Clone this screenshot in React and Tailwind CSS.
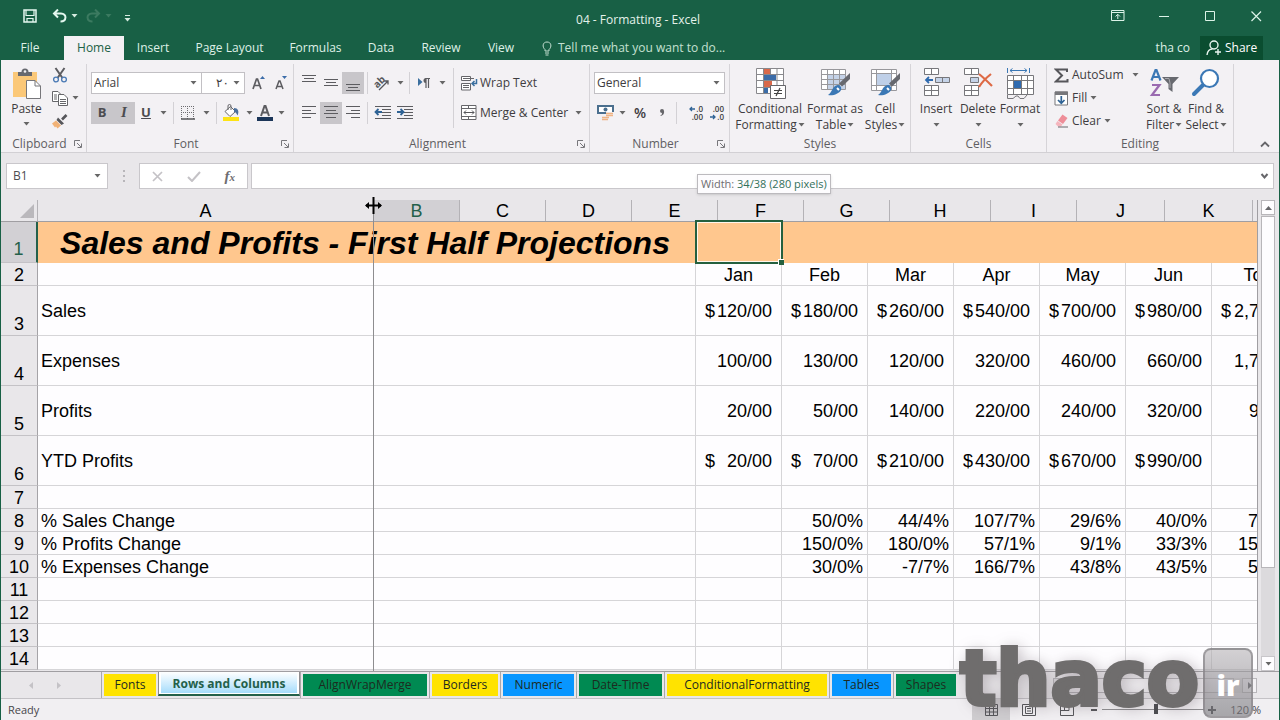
import React from "react";

/* ---------- small drawings ---------- */

function Arrow({ className = "text-[#666]" }) {
  return (
    <svg viewBox="0 0 7 4" className={`h-1 w-[7px] shrink-0 ${className}`} aria-hidden="true">
      <path d="M0.500 0H6.500L3.500 3.500Z" fill="currentColor" />
    </svg>
  );
}

function Svg({ w, h, children }) {
  return (
    <svg width={w} height={h} viewBox={`0 0 ${w} ${h}`} fill="none" className="shrink-0" aria-hidden="true">
      {children}
    </svg>
  );
}

const PasteIcon = () => (
  <Svg w={30} h={32}>
    <path d="M1 4H25V29H1Z" fill="#fbc878" />
    <path d="M6 4H9.500A3.500 3.500 0 0 1 16.500 4H20V8H6Z" fill="#67696f" />
    <circle cx="13" cy="3.500" r="1.300" fill="#f3f1f4" />
    <path d="M14.500 12.500H23L28.500 18V30.500H14.500Z" fill="#fff" stroke="#77777b" />
    <path d="M23 12.500V18H28.500" stroke="#77777b" />
  </Svg>
);
const CutIcon = () => (
  <Svg w={16} h={16}>
    <path d="M3.500 1L10.500 11M12.500 1L5.500 11" stroke="#5c5c60" strokeWidth="2" />
    <circle cx="4" cy="12.500" r="2.400" stroke="#4a7ab5" strokeWidth="1.300" />
    <circle cx="12" cy="12.500" r="2.400" stroke="#4a7ab5" strokeWidth="1.300" />
  </Svg>
);
const CopyIcon = () => (
  <Svg w={16} h={15}>
    <path d="M0.500 0.500H6L9 3.500V10.500H0.500Z" fill="#fff" stroke="#66666a" />
    <path d="M2 4H5M2 6H5M2 8H5" stroke="#66666a" />
    <path d="M6.500 3.500H12L15.500 7V14.500H6.500Z" fill="#fff" stroke="#66666a" />
    <path d="M8 8.500H14M8 10.500H14M8 12.500H14" stroke="#66666a" />
  </Svg>
);
const BrushIcon = () => (
  <Svg w={16} h={15}>
    <path d="M14.500 1L10 5.500" stroke="#56565a" strokeWidth="2.600" />
    <path d="M6 3.500L12 9.500L9.500 11L4.500 6Z" fill="#56565a" />
    <path d="M4 6.500L9 11.500L5.500 14.500L4 12.500L3 13.500L0 9.500Z" fill="#f1b277" />
  </Svg>
);
const BordersIcon = () => (
  <Svg w={14} h={14}>
    <path d="M0.500 0V13M13 0.500H0M6.500 0V13M0 6.500H13M12.500 0V13" stroke="#6c6c70" strokeDasharray="1 1" />
    <path d="M0 13H14" stroke="#56565a" strokeWidth="1.500" />
  </Svg>
);
const FillIcon = () => (
  <Svg w={18} h={18}>
    <path d="M3 7.500L8.500 2.500L13.500 7.500L8 12.500Z" fill="#fff" stroke="#66666a" />
    <path d="M6 6V2A1.500 1.500 0 0 1 9 2V6" stroke="#66666a" />
    <path d="M12 4C16 4 17.500 7.500 15.500 11.500C14.500 9 13.500 8 12 8Z" fill="#4a6f9c" />
    <path d="M1 13H17V17H1Z" fill="#fde314" />
  </Svg>
);
const FontColorIcon = () => (
  <Svg w={16} h={18}>
    <path d="M4 12L7.500 2H8.500L12 12M5 8.500H11" stroke="#5c5c60" strokeWidth="2" />
    <path d="M0 13H16V17H0Z" fill="#1b3558" />
  </Svg>
);
const GrowIcon = ({ down }) => (
  <Svg w={14} h={18}>
    {down ? (
      <>
        <path d="M2 15L5 7H6L9 15M3.500 12.500H7.500" stroke="#5c5c60" strokeWidth="1.500" />
        <path d="M8 2H13L10.500 5Z" fill="#3b6ca8" />
      </>
    ) : (
      <>
        <path d="M1 15L4.500 5H5.500L9 15M2.500 11.500H7.500" stroke="#5c5c60" strokeWidth="1.700" />
        <path d="M8 5H13L10.500 2Z" fill="#3b6ca8" />
      </>
    )}
  </Svg>
);
const Lines = ({ d }) => (
  <Svg w={22} h={22}>
    <path d={d} stroke="#5c5c60" />
  </Svg>
);
const OrientationIcon = () => (
  <Svg w={20} h={20}>
    <text x="2" y="12" fontSize="10" fontWeight="700" fill="#56565a" fontFamily="Open Sans, sans-serif" transform="rotate(-45 8 10)">ab</text>
    <path d="M7 17L16 8M12.500 8H16V11.500" stroke="#56565a" strokeWidth="1.300" />
  </Svg>
);
const DirectionIcon = () => (
  <Svg w={14} h={14}>
    <path d="M1 2L5.500 6L1 10Z" fill="#3b6f9f" />
    <path d="M9 2.500V12M11.500 2.500V12M13 2.500H8.500" stroke="#5c5c60" strokeWidth="1.200" />
    <path d="M9 2A2.500 2.500 0 0 0 9 7Z" fill="#5c5c60" />
  </Svg>
);
const IndentIcon = ({ right }) => (
  <Svg w={22} h={22}>
    <path d="M3 4.500H19M10 7.500H19M10 10.500H19M10 13.500H19M3 16.500H19" stroke="#5c5c60" />
    {right ? (
      <path d="M3 10H9M6.500 7L9.500 10L6.500 13" stroke="#2f6395" strokeWidth="1.800" />
    ) : (
      <path d="M4 10H10M6.500 7L3.500 10L6.500 13" stroke="#2f6395" strokeWidth="1.800" />
    )}
  </Svg>
);
const WrapIcon = () => (
  <Svg w={17} h={16}>
    <path d="M0.500 1.500H9.500V5.500H0.500ZM0.500 8.500H9.500V15H0.500Z" fill="#fff" stroke="#66666a" />
    <path d="M2 3.500H13M2 10.500H8M2 12.500H8" stroke="#66666a" />
    <path d="M15.500 4V8.500H11.500M13.500 6L11 8.500L13.500 11" stroke="#3b6f9f" strokeWidth="1.500" />
  </Svg>
);
const MergeIcon = () => (
  <Svg w={16} h={16}>
    <path d="M0.500 0.500H15V14.500H0.500ZM0.500 3.500H15M0.500 11.500H15M7.500 0.500V3.500M7.500 11.500V14.500" fill="#fff" stroke="#66666a" />
    <path d="M3 7.500H13M5 5.500L3 7.500L5 9.500M11 5.500L13 7.500L11 9.500" stroke="#56565a" />
  </Svg>
);
const MoneyIcon = () => (
  <Svg w={18} h={17}>
    <path d="M1 1H16V8H1Z" fill="#fff" stroke="#4b6f8e" strokeWidth="2" />
    <circle cx="8.500" cy="4.500" r="2" fill="#4b6f8e" />
    <path d="M9 7H17V12H13V16H4V11H9Z" fill="#f3f1f4" />
    <path d="M9 8.500H16M9 10.500H16M5 12.500H12M5 14.500H11" stroke="#f0b484" strokeWidth="1.500" />
  </Svg>
);
function DecimalIcon({ increase }) {
  return (
    <span className="flex w-[18px] flex-col items-end text-[8px] font-semibold leading-[8px] text-[#3c3c40]">
      <span className="flex items-center gap-px">
        {increase && (
          <Svg w={6} h={6}>
            <path d="M6 3H1M3 1L1 3L3 5" stroke="#2f6395" strokeWidth="1.300" />
          </Svg>
        )}
        {increase ? ".0" : ".00"}
      </span>
      <span className="flex items-center gap-px">
        {!increase && (
          <Svg w={6} h={6}>
            <path d="M0 3H5M3 1L5 3L3 5" stroke="#2f6395" strokeWidth="1.300" />
          </Svg>
        )}
        {increase ? ".00" : ".0"}
      </span>
    </span>
  );
}
const ConditionalIcon = () => (
  <Svg w={31} h={31}>
    <path d="M1.500 0.500H28.500V25.500H1.500Z" fill="#fff" />
    <path d="M9 1H15V7H9ZM9 13H17V19H9Z" fill="#d9694a" />
    <path d="M9 7H21V13H9ZM9 19H13V25H9Z" fill="#3b6ca8" />
    <path d="M1.500 0.500H28.500V25.500H1.500ZM1.500 6.500H28.500M1.500 12.500H28.500M1.500 19.500H28.500M8.500 0.500V25.500M15.500 0.500V6.500M22 0.500V25.500" stroke="#88888c" />
    <path d="M15.500 17.500H30.500V30.500H15.500Z" fill="#fff" stroke="#66666a" />
    <path d="M19 22.500H27M19 25.500H27M25 20L21 28" stroke="#444" strokeWidth="1.200" />
  </Svg>
);
const BrushOver = () => (
  <>
    <path d="M30 5V11L22 18.500L19 15.500Z" fill="#67696f" />
    <path d="M17.500 17C20 17 22 19 21 22C19 26 13 28 8 27C12 25 12 18 17.500 17Z" fill="#3b78b5" />
    <path d="M17 20L19 22" stroke="#fff" strokeWidth="2" />
  </>
);
const TableIcon = () => (
  <Svg w={31} h={31}>
    <path d="M1.500 1.500H25.500V21.500H1.500Z" fill="#fff" />
    <path d="M8 6.500H25V21H8Z" fill="#c5d3e8" />
    <path d="M1.500 1.500H25.500V21.500H1.500ZM1.500 6.500H25.500M1.500 11.500H25.500M1.500 16.500H25.500M7.500 1.500V21.500M13.500 1.500V21.500M19.500 1.500V21.500" stroke="#98989c" />
    <BrushOver />
  </Svg>
);
const CellStylesIcon = () => (
  <Svg w={31} h={31}>
    <path d="M1.500 1.500H26.500V22.500H1.500ZM1.500 5.500H26.500M1.500 17.500H26.500M6.500 1.500V22.500M21.500 1.500V22.500" fill="#fff" stroke="#98989c" />
    <path d="M7 6H21V17H7Z" fill="#bfd0e8" />
    <BrushOver />
  </Svg>
);
const InsertIcon = () => (
  <Svg w={30} h={31}>
    <path d="M3.500 0.500H17.500V6.500H3.500ZM10.500 0.500V6.500M3.500 17.500H17.500V27.500H3.500ZM10.500 17.500V27.500M3.500 22.500H17.500" fill="#fff" stroke="#77777b" />
    <path d="M14.500 9.500H28.500V14.500H14.500ZM21.500 9.500V14.500" fill="#c5d3e8" stroke="#77777b" />
    <path d="M12 12H5M8 9L5 12L8 15" stroke="#2f6bb0" strokeWidth="1.800" />
  </Svg>
);
const DeleteIcon = () => (
  <Svg w={32} h={31}>
    <path d="M2.500 0.500H16.500V6.500H2.500ZM9.500 0.500V6.500M2.500 17.500H16.500V27.500H2.500ZM9.500 17.500V27.500M2.500 22.500H16.500" fill="#fff" stroke="#77777b" />
    <path d="M8.500 9.500H16.500V14.500H8.500Z" fill="#c5d3e8" stroke="#77777b" />
    <path d="M17 6C22 10 27 15 30 18M29 6C24 10 20 14 17 19" stroke="#de6a45" strokeWidth="2.200" />
  </Svg>
);
const FormatIcon = () => (
  <Svg w={31} h={31}>
    <path d="M2.500 0V5M24.500 0V5M5 2.500H22M7.500 0.500L5 2.500L7.500 4.500M19.500 0.500L22 2.500L19.500 4.500" stroke="#3b78b5" />
    <path d="M2.500 7.500H28.500V26.500H2.500ZM2.500 12.500H28.500M2.500 20.500H28.500M8.500 7.500V26.500M16.500 7.500V26.500M22.500 7.500V26.500" fill="#fff" stroke="#77777b" />
    <path d="M9 13H16V20H9Z" fill="#2f6bb0" />
    <path d="M2.500 27V30.500H8L11 28H13L15 30.500H19L22 27" stroke="#77777b" />
  </Svg>
);
const SumIcon = () => (
  <Svg w={15} h={15}>
    <path d="M13 4V1.500H2L8 7.500L2 13.500H13.500V11" stroke="#56565a" strokeWidth="2" />
  </Svg>
);
const FillDownIcon = () => (
  <Svg w={15} h={15}>
    <path d="M1 1H13.500V14H1Z" fill="#fff" stroke="#77777b" />
    <path d="M1 0.500H14V4H1Z" fill="#77777b" />
    <path d="M7.300 5V12M4 9L7.300 12.300L10.500 9" stroke="#2f6395" strokeWidth="1.700" />
  </Svg>
);
const EraserIcon = () => (
  <Svg w={15} h={15}>
    <path d="M8.500 0.500L13.500 4L9 10L4 6.500Z" fill="#ee8d98" />
    <path d="M3.500 7L8.500 10.500L7 12.500H4L1.500 10Z" fill="#f5b5bd" />
    <path d="M4 13H14" stroke="#66666a" />
  </Svg>
);
const SortIcon = () => (
  <Svg w={31} h={31}>
    <path d="M2.500 12.500L6.500 2H7.500L11.500 12.500M4 9H10" stroke="#3b78b5" strokeWidth="2.200" />
    <path d="M3 17H10.500L3 27H11" stroke="#9a6bb0" strokeWidth="2.200" />
    <path d="M13 9H30L23.500 16V24L19.500 21V16Z" fill="#67696f" />
    <path d="M16 10.500H20L21 15V20" stroke="#a9a9ad" />
  </Svg>
);
const FindIcon = () => (
  <Svg w={31} h={31}>
    <path d="M3 26L12 17" stroke="#3b78b5" strokeWidth="4" strokeLinecap="round" />
    <circle cx="18.500" cy="10.500" r="8.500" fill="#fff" stroke="#3b78b5" strokeWidth="2.200" />
  </Svg>
);

/* ---------- ribbon ---------- */

function Launcher() {
  return (
    <button aria-label="More options" className="flex w-4 items-center justify-center">
      <Svg w={8} h={8}>
        <path d="M0.500 6V0.500H6M3 3L7 7M7.500 3.500V7.500H3.500" stroke="#77777b" />
      </Svg>
    </button>
  );
}

function Group({ label, width, launcher, children }) {
  return (
    <section aria-label={label} className={`flex shrink-0 flex-col ${width}`}>
      <div className="flex min-h-0 flex-1 border-r border-[#d6d4d8]">{children}</div>
      <div className="flex h-4 border-r border-[#d6d4d8] text-[#605e62]">
        <span className={`flex-1 text-center leading-4 ${launcher ? "pl-2" : ""}`}>{label}</span>
        {launcher && <Launcher />}
      </div>
    </section>
  );
}

const Sep = ({ className = "h-[22px]" }) => <span className={`w-px shrink-0 bg-[#d3d1d5] ${className}`} />;

function Tool({ label, width = "w-[22px]", on, children }) {
  return (
    <button
      aria-label={label}
      aria-pressed={on}
      className={`flex h-[22px] shrink-0 items-center justify-center ${width} ${on ? "bg-[#c8c6ca]" : ""}`}
    >
      {children}
    </button>
  );
}

function BigTool({ icon, lines, width, below }) {
  return (
    <button className={`flex shrink-0 flex-col items-center whitespace-nowrap leading-4 ${width}`}>
      <span className="flex h-8 items-start justify-center">{icon}</span>
      <span className="mt-px">{lines[0]}</span>
      {below ? (
        <span className="flex h-4 items-center">
          <Arrow />
        </span>
      ) : (
        <span className="flex h-4 items-center gap-px">
          {lines[1]}
          <Arrow />
        </span>
      )}
    </button>
  );
}

function Ribbon() {
  return (
    <div className="flex h-[93px] overflow-hidden border-b border-[#d2d0d4] bg-[#f3f1f4] pt-1 text-xs text-[#3e3c40]">
      <Group label="Clipboard" width="w-[86px]" launcher>
        <button className="flex w-[51px] flex-col items-center pt-1">
          <PasteIcon />
          <span className="leading-[18px]">Paste</span>
          <span className="flex h-3 items-center">
            <Arrow />
          </span>
        </button>
        <div className="flex flex-col">
          <Tool label="Cut" width="w-4"><CutIcon /></Tool>
          <button aria-label="Copy" className="flex h-6 items-center gap-1"><CopyIcon /><Arrow /></button>
          <Tool label="Format Painter" width="w-4"><BrushIcon /></Tool>
        </div>
      </Group>

      <Group label="Font" width="w-[207px]" launcher>
        <div className="flex flex-col gap-2 pl-1 pt-2">
          <div className="flex items-center">
            <div className="flex h-[22px] w-[111px] items-center border border-[#c2c0c4] bg-white pr-1">
              <select aria-label="Font name" className="min-w-0 flex-1 appearance-none bg-transparent pl-[2px] outline-none">
                <option>Arial</option>
              </select>
              <Arrow />
            </div>
            <div className="flex h-[22px] w-[43px] items-center border border-l-0 border-[#c2c0c4] bg-white pr-1">
              <input aria-label="Font size" defaultValue="٢٠" className="w-full min-w-0 flex-1 bg-transparent pr-1 text-right font-['DejaVu_Sans',sans-serif] outline-none" />
              <Arrow />
            </div>
            <div className="flex pl-[3px]">
              <Tool label="Increase font size"><GrowIcon /></Tool>
              <Tool label="Decrease font size"><GrowIcon down /></Tool>
            </div>
          </div>
          <div className="flex items-center">
            <Tool label="Bold" on><b className="text-[13px] text-[#4c4c50]">B</b></Tool>
            <Tool label="Italic" on><b className="font-['Liberation_Serif',serif] text-[15px] italic text-[#4c4c50]">I</b></Tool>
            <Tool label="Underline"><b className="text-[13px] text-[#4c4c50] underline">U</b></Tool>
            <Tool label="Underline style" width="w-3"><Arrow /></Tool>
            <span className="w-1" />
            <Sep />
            <Tool label="Borders" width="w-7"><BordersIcon /></Tool>
            <Tool label="Border style" width="w-2"><Arrow /></Tool>
            <span className="w-[6px]" />
            <Sep />
            <Tool label="Fill colour" width="w-7"><FillIcon /></Tool>
            <Tool label="Fill palette" width="w-2"><Arrow /></Tool>
            <Tool label="Font colour" width="w-6"><FontColorIcon /></Tool>
            <Tool label="Font palette" width="w-2"><Arrow /></Tool>
          </div>
        </div>
      </Group>

      <Group label="Alignment" width="w-[296px]" launcher>
        <div className="flex flex-col gap-2 pl-1 pt-2">
          <div className="flex items-center">
            <Tool label="Top align"><Lines d="M4 3.500H18M6 6.500H16M4 9.500H18" /></Tool>
            <Tool label="Middle align"><Lines d="M4 7.500H18M6 10.500H16M4 13.500H18" /></Tool>
            <Tool label="Bottom align" on><Lines d="M4 12.500H18M6 15.500H16M4 18.500H18" /></Tool>
            <span className="w-[3px]" />
            <Sep />
            <Tool label="Orientation" width="w-7"><OrientationIcon /></Tool>
            <Tool label="Orientation list" width="w-2"><Arrow /></Tool>
            <span className="w-[5px]" />
            <Sep />
            <Tool label="Text direction" width="w-7"><DirectionIcon /></Tool>
            <Tool label="Direction list" width="w-2"><Arrow /></Tool>
          </div>
          <div className="flex items-center">
            <Tool label="Align left"><Lines d="M4 4.500H18M4 8.500H13M4 11.500H18M4 15.500H13" /></Tool>
            <Tool label="Center" on><Lines d="M4 4.500H18M6 8.500H16M4 11.500H18M6 15.500H16" /></Tool>
            <Tool label="Align right"><Lines d="M4 4.500H18M9 8.500H18M4 11.500H18M9 15.500H18" /></Tool>
            <span className="w-[3px]" />
            <Sep />
            <span className="w-1" />
            <Tool label="Decrease indent"><IndentIcon /></Tool>
            <Tool label="Increase indent"><IndentIcon right /></Tool>
          </div>
        </div>
        <Sep className="ml-[7px] mt-1 h-[60px]" />
        <div className="flex flex-col gap-2 pl-[7px] pt-2">
          <button className="flex h-[22px] items-center gap-[2px] whitespace-nowrap"><WrapIcon />Wrap Text</button>
          <button className="flex h-[22px] items-center gap-[3px] whitespace-nowrap">
            <MergeIcon />Merge &amp; Center
            <span className="pl-1"><Arrow /></span>
          </button>
        </div>
      </Group>

      <Group label="Number" width="w-[140px]" launcher>
        <div className="flex flex-col gap-2 pl-1 pt-2">
          <div className="flex h-[22px] w-[131px] items-center border border-[#c2c0c4] bg-white pr-1">
            <select aria-label="Number format" className="min-w-0 flex-1 appearance-none bg-transparent pl-[2px] outline-none">
              <option>General</option>
            </select>
            <Arrow />
          </div>
          <div className="flex items-center">
            <Tool label="Accounting format" width="w-6"><MoneyIcon /></Tool>
            <Tool label="Accounting list" width="w-2"><Arrow /></Tool>
            <Tool label="Percent" width="w-7"><span className="text-sm font-semibold">%</span></Tool>
            <Tool label="Comma" width="w-4">
              <Svg w={6} h={10}>
                <path d="M3 1A2 2 0 1 0 3 5C3 6.500 2 7.500 1 8C4 8 5.500 5.500 5 3A2 2 0 0 0 3 1Z" fill="#66666a" />
              </Svg>
            </Tool>
            <span className="w-[6px]" />
            <Sep />
            <span className="w-[6px]" />
            <Tool label="Increase decimal" width="w-[22px]"><DecimalIcon increase /></Tool>
            <Tool label="Decrease decimal" width="w-5"><DecimalIcon /></Tool>
          </div>
        </div>
      </Group>

      <Group label="Styles" width="w-[181px]">
        <div className="flex gap-[2px] pl-[5px] pt-1">
          <BigTool icon={<ConditionalIcon />} lines={["Conditional", "Formatting"]} width="w-[70px]" />
          <BigTool icon={<TableIcon />} lines={["Format as", "Table"]} width="w-14" />
          <BigTool icon={<CellStylesIcon />} lines={["Cell", "Styles"]} width="w-10" />
        </div>
      </Group>

      <Group label="Cells" width="w-[136px]">
        <div className="flex pl-1 pt-1">
          <BigTool icon={<InsertIcon />} lines={["Insert"]} width="w-[42px]" below />
          <BigTool icon={<DeleteIcon />} lines={["Delete"]} width="w-[42px]" below />
          <BigTool icon={<FormatIcon />} lines={["Format"]} width="w-[42px]" below />
        </div>
      </Group>

      <Group label="Editing" width="w-[187px]">
        <div className="flex w-[92px] flex-col pl-[7px]">
          <button className="flex h-[22px] items-center gap-[3px]"><SumIcon />AutoSum<span className="flex-1" /><Arrow /></button>
          <button className="flex h-6 items-center gap-[3px]"><FillDownIcon />Fill<Arrow /></button>
          <button className="flex h-[22px] items-center gap-[3px]"><EraserIcon />Clear<Arrow /></button>
        </div>
        <div className="flex pl-1 pt-1">
          <BigTool icon={<SortIcon />} lines={["Sort &", "Filter"]} width="w-[42px]" />
          <BigTool icon={<FindIcon />} lines={["Find &", "Select"]} width="w-[42px]" />
        </div>
      </Group>

      <div className="flex flex-1 items-end justify-end pb-1 pr-2">
        <button aria-label="Collapse the ribbon">
          <Svg w={12} h={8}>
            <path d="M2 6.500L6 2.500L10 6.500" stroke="#66666a" strokeWidth="1.800" />
          </Svg>
        </button>
      </div>
    </div>
  );
}

/* ---------- window chrome ---------- */

function TitleBar() {
  return (
    <header className="grid h-9 grid-cols-[1fr_auto_1fr] items-center text-xs text-[#e4f2ea]">
      <div className="flex items-center pb-1 pl-[22px]">
        <button aria-label="Save">
          <Svg w={14} h={14}>
            <path d="M1 1H13V13H1Z" stroke="#e4f7ef" strokeWidth="1.500" />
            <path d="M3 1V6.500H11V1M4 13V9.500H10V13" stroke="#e4f7ef" strokeWidth="1.200" />
          </Svg>
        </button>
        <button aria-label="Undo" className="ml-[15px] flex items-center gap-1">
          <Svg w={15} h={14}>
            <path d="M6 0.500L2 4.500L6 8.500M2 4.500H9C15 4.500 15 12.500 8.500 12.500" stroke="#e4f7ef" strokeWidth="2" />
          </Svg>
          <Arrow className="text-[#d5ebe0]" />
        </button>
        <button aria-label="Redo" className="ml-2 flex items-center gap-1">
          <Svg w={15} h={14}>
            <path d="M9 0.500L13 4.500L9 8.500M13 4.500H6C0 4.500 0 12.500 6.500 12.500" stroke="#3b7a60" strokeWidth="2" />
          </Svg>
          <Arrow className="text-[#3b7a60]" />
        </button>
        <button aria-label="Customize toolbar" className="ml-3 flex flex-col items-center gap-[2px] pt-1">
          <span className="h-px w-[5px] bg-[#d5ebe0]" />
          <Arrow className="text-[#d5ebe0]" />
        </button>
      </div>
      <h1 className="pr-1 pt-1">04 - Formatting - Excel</h1>
      <div className="flex items-center justify-end pb-1">
        <button aria-label="Ribbon display options" className="flex w-[46px] justify-center">
          <Svg w={14} h={12}>
            <path d="M0.500 0.500H13V10.500H0.500ZM0.500 2.500H13M6.800 9V4.500M4.500 6.500L6.800 4.300L9 6.500" stroke="#dcf3e8" />
          </Svg>
        </button>
        <button aria-label="Minimize" className="flex w-[46px] justify-center">
          <Svg w={11} h={11}><path d="M0 5.500H10" stroke="#dcf3e8" /></Svg>
        </button>
        <button aria-label="Maximize" className="flex w-[46px] justify-center">
          <Svg w={11} h={11}><path d="M0.500 0.500H9.500V9.500H0.500Z" stroke="#dcf3e8" /></Svg>
        </button>
        <button aria-label="Close" className="flex w-[46px] justify-center">
          <Svg w={11} h={11}><path d="M0.500 0.500L10 10M10 0.500L0.500 10" stroke="#dcf3e8" strokeWidth="1.200" /></Svg>
        </button>
      </div>
    </header>
  );
}

const TABS = [
  ["File", "w-[60px] pr-2"],
  ["Home", "w-[60px] bg-[#f3f1f4] text-[#1c6146]"],
  ["Insert", "w-[58px]"],
  ["Page Layout", "w-[95px]"],
  ["Formulas", "w-[77px]"],
  ["Data", "w-[54px]"],
  ["Review", "w-[66px]"],
  ["View", "w-[54px]"],
];

function RibbonTabs() {
  return (
    <nav className="flex h-6 items-stretch pl-[3px] text-xs text-[#dff0e7]">
      {TABS.map(([name, style]) => (
        <button key={name} className={`whitespace-nowrap text-center ${style}`}>
          {name}
        </button>
      ))}
      <button className="flex items-center gap-[6px] pl-[14px] text-[#c5e0d2]">
        <Svg w={10} h={15}>
          <path d="M3 10V8.500C0 6 0.500 1 5 1C9.500 1 10 6 7 8.500V10ZM3 12H7M3.500 14H6.500" stroke="#c5e0d2" />
        </Svg>
        Tell me what you want to do...
      </button>
      <span className="flex flex-1 items-center justify-end pr-[10px]">tha co</span>
      <button className="mr-4 flex w-[63px] items-center gap-[3px] bg-[#0a4d30] pl-[6px] text-white">
        <Svg w={16} h={16}>
          <circle cx="8" cy="5" r="4" stroke="#e8f5ee" strokeWidth="1.400" />
          <path d="M1 15C1.500 11 3.500 9 6.500 9M12 9V15M9 12H15" stroke="#e8f5ee" strokeWidth="1.400" />
        </Svg>
        Share
      </button>
    </nav>
  );
}

function FormulaBar() {
  return (
    <div className="flex h-[47px] items-start bg-[#e9e7ea] pl-[5px] pr-[5px] pt-[10px] text-xs">
      <div className="flex h-[26px] w-[102px] items-center border border-[#c9c7cb] bg-white pr-[6px]">
        <input aria-label="Name box" defaultValue="B1" className="w-full min-w-0 flex-1 bg-transparent pl-[6px] text-[#4e4c50] outline-none" />
        <Arrow />
      </div>
      <div className="flex h-[26px] w-[31px] items-center justify-center">
        <Svg w={2} h={12}>
          <path d="M0 0H2V2H0ZM0 5H2V7H0ZM0 10H2V12H0Z" fill="#b8b6ba" />
        </Svg>
      </div>
      <div className="flex h-[26px] w-[109px] items-center justify-around border border-[#c9c7cb] bg-white">
        <button aria-label="Cancel"><Svg w={11} h={11}><path d="M1 1L10 10M10 1L1 10" stroke="#c4c2c6" strokeWidth="1.700" /></Svg></button>
        <button aria-label="Enter"><Svg w={14} h={11}><path d="M1 6L5 10L13 1" stroke="#c4c2c6" strokeWidth="2" /></Svg></button>
        <button aria-label="Insert function" className="font-['Liberation_Serif',serif] text-[15px] font-bold italic leading-5 text-[#6e6c70]">
          f<span className="text-[11px]">x</span>
        </button>
      </div>
      <div className="ml-[3px] flex h-[26px] flex-1 items-center border border-[#c9c7cb] bg-white pr-1">
        <input aria-label="Formula" className="min-w-0 flex-1 bg-transparent px-2 outline-none" />
        <Svg w={9} h={8}><path d="M1.500 2L4.500 5.500L7.500 2" stroke="#66666a" strokeWidth="2" /></Svg>
      </div>
    </div>
  );
}

/* ---------- sheet ---------- */

const HEADS = [
  ["A", "w-[336px]"],
  ["B", "w-[86px]"],
  ["C", "w-[86px]"],
  ["D", "w-[86px]"],
  ["E", "w-[86px]"],
  ["F", "w-[86px]"],
  ["G", "w-[86px]"],
  ["H", "w-[101px]"],
  ["I", "w-[86px]"],
  ["J", "w-[88px]"],
  ["K", "w-[88px]"],
];

const MONTHS = ["Jan", "Feb", "Mar", "Apr", "May", "Jun", "Total"];

const ROWS = [
  { n: 3, label: "Sales", kind: "money", v: ["120/00", "180/00", "260/00", "540/00", "700/00", "980/00", "2,780/00"] },
  { n: 4, label: "Expenses", kind: "number", v: ["100/00", "130/00", "120/00", "320/00", "460/00", "660/00", "1,780/00"] },
  { n: 5, label: "Profits", kind: "number", v: ["20/00", "50/00", "140/00", "220/00", "240/00", "320/00", "990/00"] },
  { n: 6, label: "YTD Profits", kind: "money", v: ["20/00", "70/00", "210/00", "430/00", "670/00", "990/00", ""] },
  { n: 7 },
  { n: 8, label: "% Sales Change", kind: "percent", v: ["", "50/0%", "44/4%", "107/7%", "29/6%", "40/0%", "716/7%"] },
  { n: 9, label: "% Profits Change", kind: "percent", v: ["", "150/0%", "180/0%", "57/1%", "9/1%", "33/3%", "1500/0%"] },
  { n: 10, label: "% Expenses Change", kind: "percent", v: ["", "30/0%", "-7/7%", "166/7%", "43/8%", "43/5%", "560/0%"] },
  { n: 11 },
  { n: 12 },
  { n: 13 },
  { n: 14 },
];

const CELL = "border-b border-r border-[#d6d5d8]";
const ROW_HEAD = "border-b border-r border-b-[#c4c2c6] border-r-[#a5a3a7] bg-[#e9e7ea] text-center align-bottom font-normal";
const SHORT_ROW = "h-[23px] leading-5 [&>*]:pt-[2px]";

function Value({ kind, text }) {
  if (!text) return null;
  if (kind === "money") {
    return (
      <span className="flex justify-between px-[9px]">
        <span>$</span>
        <span>{text}</span>
      </span>
    );
  }
  return <span className={`block text-right ${kind === "percent" ? "pr-1" : "pr-[9px]"}`}>{text}</span>;
}

function Sheet() {
  return (
    <div className="relative min-w-0 flex-1 overflow-hidden font-['Liberation_Sans',Arial,sans-serif] text-lg leading-[22px] text-black">
      <div className="flex h-[22px] border-b border-[#a09ea2] bg-[#e9e7ea]">
        <div className="flex w-[37px] shrink-0 items-end justify-end border-r border-[#b4b2b6] pb-[3px] pr-[3px]">
          <Svg w={14} h={14}><path d="M14 0V14H0Z" fill="#bab8bc" /></Svg>
        </div>
        {HEADS.map(([name, width]) => (
          <div
            key={name}
            className={`shrink-0 border-r border-[#b4b2b6] text-center ${width} ${name === "B" ? "bg-[#d2d0d4] text-[#24604a]" : ""}`}
          >
            {name}
          </div>
        ))}
      </div>
      <table className="w-[1313px] table-fixed border-separate border-spacing-0 bg-[#fefdff]">
        <colgroup>
          <col className="w-[37px]" />
          <col className="w-[658px]" />
          <col className="w-[86px]" />
          <col className="w-[86px]" />
          <col className="w-[86px]" />
          <col className="w-[86px]" />
          <col className="w-[86px]" />
          <col className="w-[86px]" />
          <col />
        </colgroup>
        <tbody>
          <tr className="h-[41px] bg-[#ffc78e]">
            <th scope="row" className="border-b border-r-2 border-b-[#c4c2c6] border-r-[#24604a] bg-[#d2d0d4] pb-[2px] text-center align-bottom font-normal text-[#24604a]">1</th>
            <td className="pr-1 pt-px text-center text-[32px] font-bold italic leading-10">Sales and Profits - First Half Projections</td>
            <td className="relative">
              <div className="absolute -inset-px -top-[2px] border-2 border-[#24603f]">
                <div className="h-full border border-[#fff6ec]" />
                <span className="absolute -bottom-[3px] -right-[3px] h-[6px] w-[6px] border-l border-t border-white bg-[#24603f]" />
              </div>
            </td>
            <td colSpan={6} />
          </tr>
          <tr className={SHORT_ROW}>
            <th scope="row" className={ROW_HEAD}>2</th>
            <td className={CELL} />
            {MONTHS.map((m) => (
              <td key={m} className={`${CELL} text-center`}>{m}</td>
            ))}
          </tr>
          {ROWS.map((r) => (
            <tr key={r.n} className={r.n < 7 ? "h-[50px]" : SHORT_ROW}>
              <th scope="row" className={ROW_HEAD}>{r.n}</th>
              <td className={`${CELL} pl-[3px]`}>{r.label}</td>
              {MONTHS.map((m, i) => (
                <td key={m} className={CELL}>
                  <Value kind={r.kind} text={r.v ? r.v[i] : ""} />
                </td>
              ))}
            </tr>
          ))}
        </tbody>
      </table>
      <div className="absolute bottom-0 left-[372px] top-[14px] w-px bg-[#8e8d90]" />
    </div>
  );
}

function VerticalScroll() {
  return (
    <div className="flex w-[14px] flex-col bg-[#dcdadd]">
      <button aria-label="Scroll up" className="flex h-[15px] items-center justify-center border border-[#b8b6ba] bg-[#fefdff]">
        <Svg w={7} h={4}><path d="M0 4H7L3.500 0Z" fill="#66666a" /></Svg>
      </button>
      <div className="mt-px h-[352px] border border-[#b8b6ba] bg-[#fefdff]" />
      <div className="flex-1" />
      <button aria-label="Scroll down" className="flex h-[15px] items-center justify-center border border-[#c8c6ca] bg-[#fefdff]">
        <Arrow />
      </button>
    </div>
  );
}

const SHEETS = [
  ["Fonts", "w-[52px] bg-[#ffe300]"],
  ["Rows and Columns", ""],
  ["AlignWrapMerge", "w-[124px] bg-[#008a52]"],
  ["Borders", "w-[66px] bg-[#ffe300]"],
  ["Numeric", "w-[71px] bg-[#0896ff]"],
  ["Date-Time", "w-[83px] bg-[#008a52]"],
  ["ConditionalFormatting", "w-[160px] bg-[#ffe300]"],
  ["Tables", "w-[59px] bg-[#0896ff]"],
  ["Shapes", "w-[60px] bg-[#008a52]"],
];

function SheetTabs() {
  return (
    <div className="flex h-7 border-b border-t border-b-[#c4c2c6] border-t-[#a09ea2] bg-[#e9e7ea] text-xs">
      <div className="flex w-[100px] items-center gap-6 pl-[28px]">
        <button aria-label="Previous sheet"><Svg w={4} h={7}><path d="M4 0V7L0 3.500Z" fill="#c4c2c6" /></Svg></button>
        <button aria-label="Next sheet"><Svg w={4} h={7}><path d="M0 0V7L4 3.500Z" fill="#c4c2c6" /></Svg></button>
      </div>
      {SHEETS.map(([name, style]) =>
        style ? (
          <div key={name} className="flex items-start border-l border-[#aaa8ac] px-[2px] pt-[2px]">
            <button className={`h-[22px] whitespace-nowrap text-[#1d2a20] ${style}`}>{name}</button>
          </div>
        ) : (
          <div key={name} className="flex h-6 w-[142px] border-b-2 border-l border-r border-[#24604a] border-l-[#8e8d90] border-r-[#8e8d90] bg-white px-[2px] pb-px">
            <button className="flex-1 whitespace-nowrap bg-linear-to-b from-white to-[#a5dcfb] pt-[3px] font-bold text-[#24604a]">{name}</button>
          </div>
        )
      )}
      <div className="flex flex-1 items-center justify-end pr-[22px]">
        <div className="flex h-[15px] w-[204px] justify-between bg-[#dcdadd]">
          <button aria-label="Scroll left" className="flex w-[15px] items-center justify-center border border-[#b8b6ba]">
            <Svg w={4} h={7}><path d="M4 0V7L0 3.500Z" fill="#66666a" /></Svg>
          </button>
          <div className="mr-2 flex-1 border border-l-0 border-[#b8b6ba] bg-[#eeecef]" />
          <button aria-label="Scroll right" className="flex w-[15px] items-center justify-center border border-[#b8b6ba] bg-[#f3f1f4]">
            <Svg w={4} h={7}><path d="M0 0V7L4 3.500Z" fill="#56565a" /></Svg>
          </button>
        </div>
      </div>
    </div>
  );
}

function StatusBar() {
  return (
    <footer className="flex h-[21px] items-center bg-[#f1eff2] pl-[7px] pr-[18px] text-[11px] text-[#48464a]">
      <span className="flex-1 pt-[2px]">Ready</span>
      <button aria-label="Normal view" className="flex h-full w-[38px] items-center justify-center bg-[#cfcdd0]">
        <Svg w={13} h={12}><path d="M0.500 0.500H12.500V11.500H0.500ZM4.500 0V12M8.500 0V12M0 4.500H13M0 8H13" stroke="#56565a" /></Svg>
      </button>
      <button aria-label="Page layout view" className="flex w-[38px] items-center justify-center">
        <Svg w={14} h={12}><path d="M0.500 0.500H13.500V11.500H0.500ZM3.500 2.500H10.500V9.500H3.500ZM5 4.500H9M5 7H9" stroke="#56565a" /></Svg>
      </button>
      <button aria-label="Page break view" className="flex w-[38px] items-center justify-center">
        <Svg w={14} h={12}><path d="M0.500 0.500H13.500V11.500H0.500ZM4.500 0V6M9 0V6.500H0" stroke="#56565a" /></Svg>
      </button>
      <button aria-label="Zoom out" className="flex w-4 items-center justify-center"><span className="h-[2px] w-[6px] bg-[#56565a]" /></button>
      <input
        type="range"
        aria-label="Zoom level"
        min="0"
        max="100"
        defaultValue="53"
        className="h-[10px] w-[102px] appearance-none bg-transparent [&::-webkit-slider-runnable-track]:h-px [&::-webkit-slider-runnable-track]:bg-[#8e8d90] [&::-webkit-slider-thumb]:-mt-[5px] [&::-webkit-slider-thumb]:h-[10px] [&::-webkit-slider-thumb]:w-1 [&::-webkit-slider-thumb]:appearance-none [&::-webkit-slider-thumb]:bg-[#4c4c50]"
      />
      <button aria-label="Zoom in" className="flex w-4 items-center justify-center">
        <Svg w={8} h={8}><path d="M0 4H8M4 0V8" stroke="#4c4c50" strokeWidth="2" /></Svg>
      </button>
      <span className="pl-[10px] pt-[2px]">120 %</span>
    </footer>
  );
}

function Watermark() {
  return (
    <div className="pointer-events-none absolute bottom-0 right-[26px] flex h-[72px] items-start gap-1">
      <span className="font-['DejaVu_Sans',sans-serif] text-[76px] font-bold leading-[62px] text-[#6f6d6d] drop-shadow-[4px_1px_7px_rgba(90,75,85,0.3)] [-webkit-text-stroke:4px_#6f6d6d]">
        thaco
      </span>
      <span className="flex h-[70px] w-[50px] items-center justify-center rounded-lg border-2 border-[#8a888b]/70 bg-linear-to-b from-[#b5b3b6]/60 to-[#77757a]/60 pt-1 font-['Open_Sans',sans-serif] text-[29px] font-extrabold leading-8 text-white">
        ir
      </span>
    </div>
  );
}

export default function App() {
  return (
    <div className="relative flex min-h-screen flex-col overflow-hidden border-l border-r border-[#186045] bg-[#186045] font-['Open_Sans','Noto_Sans',sans-serif]">
      <TitleBar />
      <RibbonTabs />
      <Ribbon />
      <FormulaBar />
      <main className="flex flex-1 bg-[#e9e7ea] pr-1">
        <Sheet />
        <div className="mr-[3px] w-px bg-[#a09ea2]" />
        <VerticalScroll />
      </main>
      <SheetTabs />
      <StatusBar />

      <div className="pointer-events-none absolute left-[696px] top-[174px] whitespace-nowrap border border-[#bcbabe] bg-[#fdfcfe] px-[3px] text-[11px] leading-[18px] text-[#6e6c70] shadow-sm">
        Width: <span className="text-[#33705a]">34/38 (280 pixels)</span>
      </div>
      <svg className="pointer-events-none absolute left-[364px] top-[197px]" width="17" height="17" viewBox="0 0 17 17" aria-hidden="true">
        <path d="M8.500 0V17M1 8.500H16" stroke="#000" strokeWidth="2" />
        <path d="M0 8.500L4 5V12ZM17 8.500L13 5V12Z" fill="#000" />
      </svg>
      <Watermark />
    </div>
  );
}
